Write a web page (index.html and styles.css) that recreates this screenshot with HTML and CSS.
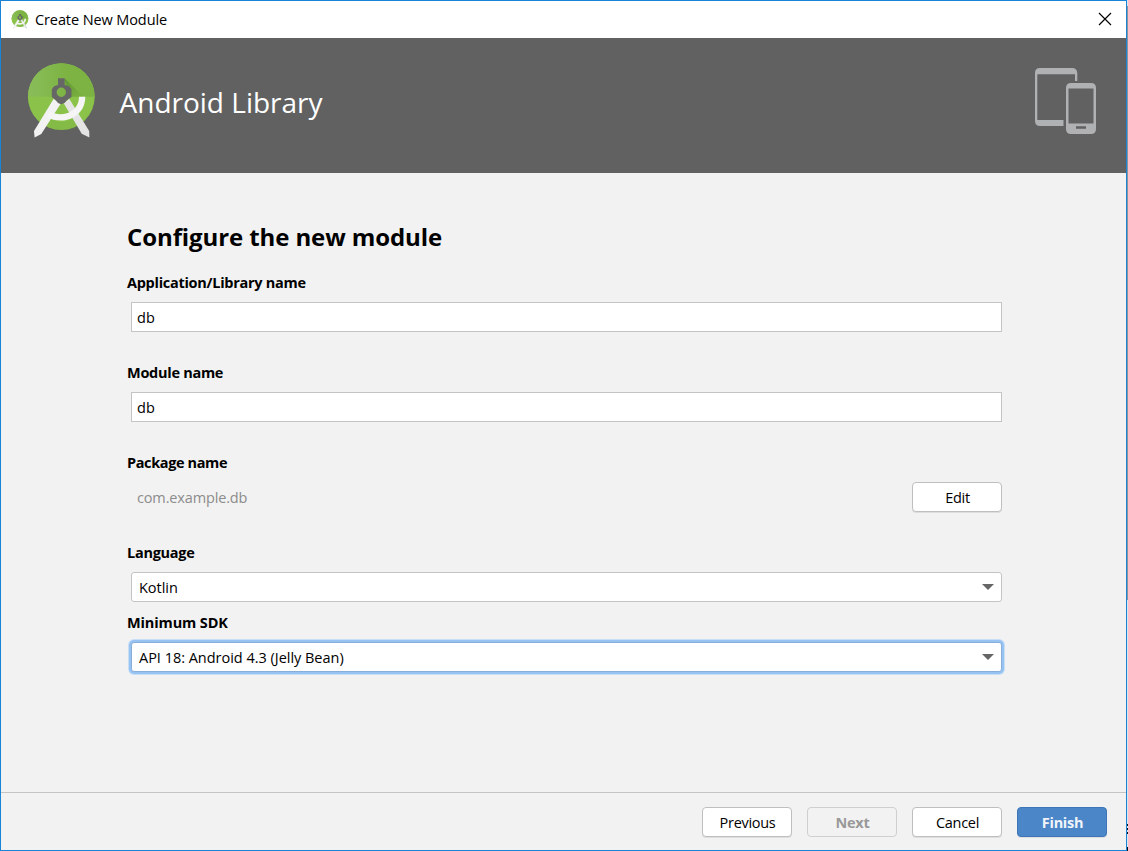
FILE: index.html
```html
<!DOCTYPE html>
<html lang="en">
<head>
<meta charset="utf-8">
<title>Create New Module</title>
<link rel="stylesheet" href="styles.css">
</head>
<body>
<div class="desktop">
<div class="window">
  <header class="titlebar">
    <svg class="app-icon" width="18" height="20" viewBox="20 0 71 78"><use href="#studio"/></svg>
    <span class="window-title">Create New Module</span>
    <svg class="close" width="14" height="14" viewBox="0 0 14 14"><path d="M1 1l12 12M13 1L1 13" fill="none" stroke="#000" stroke-width="1.15"/></svg>
  </header>
  <div class="banner">
    <svg class="logo" width="71" height="78" viewBox="20 0 71 78">
      <defs>
        <linearGradient id="top" x1="0" y1="0" x2="1" y2="0"><stop offset="0" stop-color="#8abd5a"/><stop offset=".6" stop-color="#7cb342"/></linearGradient>
        <linearGradient id="shade" x1="0" y1="0" x2="1" y2="1"><stop offset="0" stop-color="#558b2f" stop-opacity=".8"/><stop offset="1" stop-color="#689f38" stop-opacity=".1"/></linearGradient>
      </defs>
      <g id="studio">
        <circle cx="55.3" cy="33.700" r="33.400" fill="#8bc34a"/>
        <path d="M21.900 33.700a33.400 33.400 0 0 1 66.800 0z" fill="url(#top)"/>
        <path d="M58.700 15.500l19 18.200H62z" fill="url(#shade)"/>
        <path d="M42 54.300Q55 63 68 55L74 65.500Q55 70 37 63z" fill="#558b2f" opacity=".13"/>
        <path d="M57.700 40.300l5.500-4.500L83.200 68l.2 6.600-7.700-3.800z" fill="#e4e4e4"/>
        <path d="M47.700 35.700l6.800 5.300-19.200 30-6.700 3.600-.6-6.600z" fill="#f2f2f2"/>
        <path d="M44.500 48.700C49 51.500 59 52.500 64.500 48.500C70.500 45 73 40 73 33.700H79.300C79.300 43 75 50 67.800 54C59 59.500 48 58 41 54.300z" fill="#f5f5f5"/>
        <path fill="#666" fill-rule="evenodd" d="M52 15.300h6.700V22l4.500 1.300 2.300 3V34L61 37l-2.500 3-3.200 1.200L52 40l-2.500-3-3.700-3v-7.700l2.300-3L52 22zM60 29.300a4.700 4.700 0 1 0-9.400 0a4.700 4.700 0 0 0 9.400 0z"/>
      </g>
    </svg>
    <h1 class="banner-title">Android Library</h1>
    <svg class="devices" width="64" height="68" viewBox="0 0 64 68">
      <path fill="#afb1b3" fill-rule="evenodd" d="M6 1H38Q43.300 1 43.300 6.500V14H41V7.300H3.300V53H29.500V59H6Q1 59 1 54V6Q1 1 6 1z"/>
      <path fill="#afb1b3" fill-rule="evenodd" d="M37 16H57Q62 16 62 21V62Q62 67 57 67H37Q32 67 32 62V21Q32 16 37 16zM34.500 21.500V56.500H59.500V21.500zM42 59.200V61.700H52V59.200z"/>
    </svg>
  </div>
  <main class="content">
    <h2 class="heading">Configure the new module</h2>
    <div class="field"><label class="label l-app">Application/Library name</label><div class="input">db</div></div>
    <div class="field"><label class="label">Module name</label><div class="input">db</div></div>
    <div class="field"><label class="label l-pkg">Package name</label>
      <div class="package"><span class="package-name">com.example.db</span><button class="button">Edit</button></div></div>
    <div class="field compact"><label class="label">Language</label><div class="select"><span>Kotlin</span><svg class="arrow" width="12" height="6" viewBox="0 0 12 6"><path d="M0 0h12L6 6z" fill="#666"/></svg></div></div>
    <div class="field"><label class="label l-sdk">Minimum SDK</label><div class="select focused"><span>API 18: Android 4.3 (Jelly Bean)</span><svg class="arrow" width="12" height="6" viewBox="0 0 12 6"><path d="M0 0h12L6 6z" fill="#666"/></svg></div></div>
  </main>
  <footer class="footer">
    <button class="button">Previous</button>
    <button class="button disabled" disabled>Next</button>
    <button class="button">Cancel</button>
    <button class="button primary">Finish</button>
  </footer>
</div>
<div class="backdrop"></div>
</div>
</body>
</html>
```
FILE: styles.css
```css
* { box-sizing: border-box; }
body { margin: 0; font: 14.5px/20px "Open Sans", "Noto Sans", sans-serif; color: #000; }
h1, h2 { margin: 0; }
.desktop { display: flex; width: 1128px; height: 851px; overflow: hidden; }
.window { width: 1127px; height: 851px; border: 1px solid #1883d7; background: #f2f2f2; display: flex; flex-direction: column; }
.backdrop { width: 1px; background: linear-gradient(#dde5ec 6px, #8c959c 6px 600px, #dde5ec 600px 824px, #111 824px 826px, #dde5ec 826px 828px, #111 828px 830px, #dde5ec 830px 832px, #111 832px 834px, #dde5ec 834px 847px, #111 847px); }
.titlebar { height: 37px; background: #fff; display: flex; align-items: center; padding: 0 14px 1px 10px; }
.app-icon { flex: none; margin-top: 2px; }
.window-title { margin: 1px 0 0 6px; letter-spacing: -.1px; }
.close { margin-left: auto; }
.banner { height: 135px; background: #616161; display: flex; align-items: flex-start; padding: 24px 30px 0 25px; }
.logo { flex: none; margin-top: 1px; }
.banner-title { margin: 18px 0 0 22.5px; color: #fff; font-weight: 400; font-size: 28px; line-height: 44px; }
.devices { margin: 5px -2px 0 auto; }
.content { flex: 1; padding: 46px 124px 0 126px; }
.heading { font-size: 24px; line-height: 36px; letter-spacing: -.1px; }
.field { height: 90px; }
.heading + .field { margin-top: 18px; }
.compact { height: 70px; }
.label { display: block; font-weight: 700; height: 29px; line-height: 20px; white-space: nowrap; letter-spacing: -.28px; }
.l-pkg { letter-spacing: -.38px; }
.l-sdk { letter-spacing: -.13px; }
.input, .select { margin-left: 4px; height: 30px; background: #fff; border: 1px solid #c4c4c4; line-height: 30px; padding-left: 5px; letter-spacing: .1px; }
.select { border-radius: 3px; display: flex; align-items: center; padding: 1px 7px 0 7px; letter-spacing: -.02px; }
.arrow { margin: -1px 0 0 auto; }
.focused { border-color: #87afda; box-shadow: 0 0 0 2px #97c3f3, 0 0 0 3px #c9dff6; }
.package { display: flex; justify-content: space-between; line-height: 31px; padding-left: 10px; color: #8c8c8c; }
.package-name { letter-spacing: -.15px; }
.button { width: 90px; height: 30px; padding: 1px 0 0 1px; border: 1px solid #bfbfbf; border-radius: 4px; background: #fff; box-shadow: 0 1px 0 #dedede; font: inherit; line-height: 27px; color: #000; letter-spacing: -.3px; }
.disabled { background: #f2f2f2; border-color: #cfcfcf; box-shadow: none; color: #999; font-weight: 700; }
.primary { background: #4a86c8; border-color: #3d75b9; color: #f0f4fa; font-weight: 700; }
.footer { height: 58px; border-top: 1px solid #c4c4c4; display: flex; justify-content: flex-end; gap: 15px; padding: 14px 19px 0 0; }
```
